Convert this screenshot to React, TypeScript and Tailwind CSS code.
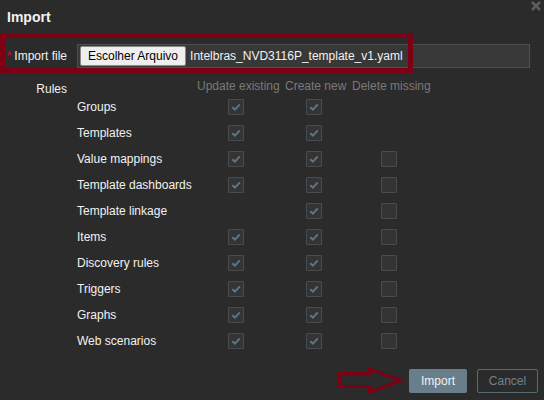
import React from 'react';

type Rule = { label: string; update?: boolean; create?: boolean; del?: boolean };

const RULES: Rule[] = [
  { label: 'Groups', update: true, create: true },
  { label: 'Templates', update: true, create: true },
  { label: 'Value mappings', update: true, create: true, del: false },
  { label: 'Template dashboards', update: true, create: true, del: false },
  { label: 'Template linkage', create: true, del: false },
  { label: 'Items', update: true, create: true, del: false },
  { label: 'Discovery rules', update: true, create: true, del: false },
  { label: 'Triggers', update: true, create: true, del: false },
  { label: 'Graphs', update: true, create: true, del: false },
  { label: 'Web scenarios', update: true, create: true, del: false },
];

const Checkbox: React.FC<{ checked?: boolean }> = ({ checked }) => (
  <div className="w-[16px] h-[16px] border border-[#4b4b4b] bg-[#343434] rounded-[1px] flex items-center justify-center">
    {checked && (
      <svg width="12" height="12" viewBox="0 0 12 12">
        <path d="M2.3 6.2 L4.9 8.6 L9.8 3.4" fill="none" stroke="#5d7585" strokeWidth="2" />
      </svg>
    )}
  </div>
);

const Cell: React.FC<{ value?: boolean }> = ({ value }) => (
  <div className="flex items-center justify-center pr-[4px]">
    {value !== undefined && <Checkbox checked={value} />}
  </div>
);

const App: React.FC = () => {
  return (
    <div className="relative w-[544px] h-[400px] bg-[#2b2b2b] font-['Liberation_Sans',Arial,sans-serif] text-[12px] text-[#f2f2f2] overflow-hidden">
      {/* title */}
      <div className="pt-[8px] pl-[7px] text-[14px] leading-[18px] font-bold">Import</div>
      <svg className="absolute left-[531px] top-[1px]" width="10" height="10" viewBox="0 0 10 10">
        <path d="M1 1 L9 9 M9 1 L1 9" stroke="#5c5c5c" strokeWidth="2.6" />
      </svg>

      {/* form */}
      <div className="mt-[18px] grid grid-cols-[67px_1fr] gap-x-[10px] pr-[14px]">
        <div className="flex items-center justify-end h-[24px] whitespace-nowrap">
          <span className="text-[#e2001a] mr-[3px]">*</span>
          <span>Import file</span>
        </div>
        <div className="h-[24px] border border-[#4f4f4f] bg-[#383838] flex items-center pl-[2px]">
          <button className="h-[20px] px-[7px] border border-[#8a8a8a] bg-[#efefef] text-black rounded-[2px] leading-[18px]">
            Escolher Arquivo
          </button>
          <span className="ml-[4px] whitespace-nowrap">Intelbras_NVD3116P_template_v1.yaml</span>
        </div>

        <div className="mt-[11px] pt-[3px] leading-[14px] text-right">Rules</div>
        <div className="mt-[11px] grid grid-cols-[114px_82px_61px_77px] gap-x-[6px]">
          <div className="h-[15px]" />
          <div className="h-[15px] leading-[14px] text-center text-[#7a7a7a] whitespace-nowrap">Update existing</div>
          <div className="h-[15px] leading-[14px] text-center text-[#7a7a7a] whitespace-nowrap">Create new</div>
          <div className="h-[15px] leading-[14px] text-center text-[#7a7a7a] whitespace-nowrap">Delete missing</div>
          {RULES.map((r) => (
            <React.Fragment key={r.label}>
              <div className="h-[26px] flex items-center whitespace-nowrap">{r.label}</div>
              <Cell value={r.update} />
              <Cell value={r.create} />
              <Cell value={r.del} />
            </React.Fragment>
          ))}
        </div>
      </div>

      {/* footer buttons */}
      <div className="mt-[15px] flex justify-end gap-[10px] pr-[6px]">
        <button className="w-[58px] h-[24px] bg-[#687e8a] rounded-[2px] text-[#f2f2f2]">Import</button>
        <button className="w-[61px] h-[24px] border border-[#566a76] rounded-[2px] text-[#6d8391]">Cancel</button>
      </div>

      {/* annotations */}
      <div className="absolute left-0 top-[33px] w-[413px] h-[40px] border-[5px] border-[#7d0014] pointer-events-none" />
      <svg className="absolute left-[336px] top-[366px]" width="70" height="30" viewBox="0 0 70 30">
        <polygon
          points="3.5,7.5 33.5,7.5 33.5,3 65,14.5 33.5,26 33.5,20.5 3.5,20.5"
          fill="none"
          stroke="#7d0014"
          strokeWidth="3"
          strokeLinejoin="miter"
        />
      </svg>
    </div>
  );
};

export default App;
